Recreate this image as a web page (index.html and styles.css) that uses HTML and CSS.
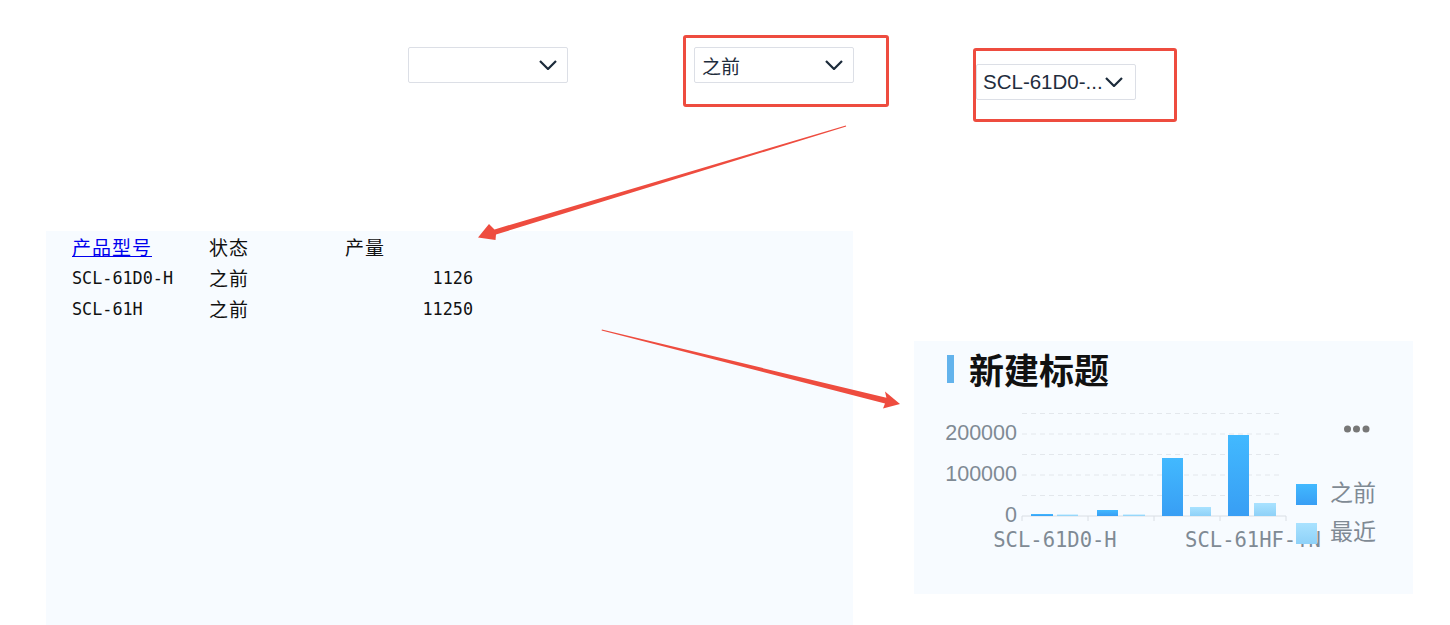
FILE: index.html
```html
<!DOCTYPE html>
<html lang="zh-CN">
<head>
    <meta charset="UTF-8">
    <meta name="viewport" content="width=device-width, initial-scale=1.0">
    <title>仪表板设计</title>
    <link rel="stylesheet" href="styles.css">
</head>
<body>
    <div class="canvas">
        <!-- filter widgets -->
        <div class="select select-a">
            <span class="select-text"></span>
            <svg class="chevron" width="18" height="10" viewBox="0 0 18 10"><polyline points="1,1 9,9 17,1"/></svg>
        </div>
        <div class="select select-b">
            <span class="select-text">之前</span>
            <svg class="chevron" width="18" height="10" viewBox="0 0 18 10"><polyline points="1,1 9,9 17,1"/></svg>
        </div>
        <div class="select select-c">
            <span class="select-text latin">SCL-61D0-...</span>
            <svg class="chevron" width="18" height="10" viewBox="0 0 18 10"><polyline points="1,1 9,9 17,1"/></svg>
        </div>

        <!-- detail table -->
        <div class="panel table-panel">
            <table class="data-table">
                <thead>
                    <tr>
                        <th class="col-model"><a href="#">产品型号</a></th>
                        <th class="col-state">状态</th>
                        <th class="col-qty">产量</th>
                    </tr>
                </thead>
                <tbody>
                    <tr>
                        <td class="col-model">SCL-61D0-H</td>
                        <td class="col-state">之前</td>
                        <td class="col-qty">1126</td>
                    </tr>
                    <tr>
                        <td class="col-model">SCL-61H</td>
                        <td class="col-state">之前</td>
                        <td class="col-qty">11250</td>
                    </tr>
                </tbody>
            </table>
        </div>

        <!-- bar chart -->
        <div class="panel chart-panel">
            <div class="chart-title">
                <span class="title-bar"></span>
                <h2>新建标题</h2>
            </div>
            <svg class="chart" width="499" height="199" viewBox="0 0 499 199">
                <defs>
                    <linearGradient id="gBefore" x1="0" y1="0" x2="0" y2="1">
                        <stop offset="0" stop-color="#42b9ff"/>
                        <stop offset="1" stop-color="#389ef4"/>
                    </linearGradient>
                    <linearGradient id="gRecent" x1="0" y1="0" x2="0" y2="1">
                        <stop offset="0" stop-color="#a9e2ff"/>
                        <stop offset="1" stop-color="#8ed1f8"/>
                    </linearGradient>
                </defs>
                <g class="grid">
                    <line x1="108" y1="18.5" x2="366" y2="18.5"/>
                    <line x1="108" y1="39" x2="366" y2="39"/>
                    <line x1="108" y1="59.5" x2="366" y2="59.5"/>
                    <line x1="108" y1="80" x2="366" y2="80"/>
                    <line x1="108" y1="100.5" x2="366" y2="100.5"/>
                </g>
                <g class="axis">
                    <line x1="108" y1="121" x2="372" y2="121"/>
                    <line x1="108" y1="121" x2="108" y2="126"/>
                    <line x1="174" y1="121" x2="174" y2="126"/>
                    <line x1="240" y1="121" x2="240" y2="126"/>
                    <line x1="306" y1="121" x2="306" y2="126"/>
                    <line x1="372" y1="121" x2="372" y2="126"/>
                </g>
                <g class="y-labels">
                    <text x="103" y="39">200000</text>
                    <text x="103" y="80">100000</text>
                    <text x="103" y="121">0</text>
                </g>
                <g class="bars">
                    <rect x="117" y="119" width="22" height="2" fill="url(#gBefore)"/>
                    <rect x="143" y="119.5" width="21" height="1.5" fill="url(#gRecent)"/>
                    <rect x="183" y="115" width="21" height="6" fill="url(#gBefore)"/>
                    <rect x="209" y="119.5" width="22" height="1.5" fill="url(#gRecent)"/>
                    <rect x="248" y="63" width="21" height="58" fill="url(#gBefore)"/>
                    <rect x="276" y="112" width="21" height="9" fill="url(#gRecent)"/>
                    <rect x="314" y="40" width="21" height="81" fill="url(#gBefore)"/>
                    <rect x="340" y="108" width="22" height="13" fill="url(#gRecent)"/>
                </g>
                <g class="x-labels">
                    <text x="141" y="146">SCL-61D0-H</text>
                    <text x="339" y="146">SCL-61HF-TN</text>
                </g>
                <g class="legend">
                    <rect x="382" y="89" width="21" height="21" fill="url(#gBefore)"/>
                    <rect x="382" y="128" width="21" height="21" fill="url(#gRecent)"/>
                    <text x="416" y="100">之前</text>
                    <text x="416" y="139">最近</text>
                </g>
                <g class="more">
                    <circle cx="433.5" cy="34" r="3.5"/>
                    <circle cx="442.5" cy="34" r="3.5"/>
                    <circle cx="452" cy="34" r="3.5"/>
                </g>
            </svg>
        </div>

        <!-- annotations -->
        <div class="mark mark-b"></div>
        <div class="mark mark-c"></div>
        <svg class="arrows" width="1450" height="625" viewBox="0 0 1450 625">
            <polygon points="846.2,126.5 496,234.5 495.5,240 478,237.5 489,224 494.5,229.4 845.8,125.5"/>
            <polygon points="601.9,329.5 886.4,397.7 885,391.5 900,404 883,408.5 885,403.5 601.6,330.5"/>
        </svg>
    </div>
</body>
</html>
```

FILE: styles.css
```css
* {
    margin: 0;
    padding: 0;
    box-sizing: border-box;
}
body {
    background-color: #fff;
    font-family: "Noto Sans CJK SC", "Liberation Sans", sans-serif;
    color: #1f2d3d;
}
.canvas {
    position: relative;
    width: 1450px;
    height: 625px;
    overflow: hidden;
}

/* selects */
.select {
    position: absolute;
    width: 160px;
    height: 36px;
    background: #fff;
    border: 1px solid #dcdfe6;
    border-radius: 2px;
    display: flex;
    align-items: center;
    justify-content: space-between;
    padding: 0 10px 0 7px;
}
.select-a { left: 408px; top: 47px; }
.select-b { left: 694px; top: 47px; }
.select-c { left: 976px; top: 64px; padding: 0 12px 0 6px; }
.select-text {
    font-size: 19px;
    color: #1f2d3d;
    white-space: nowrap;
}
.select-text.latin {
    font-family: "Liberation Sans", sans-serif;
    font-size: 20.5px;
}
.chevron polyline {
    fill: none;
    stroke: #1b2a3a;
    stroke-width: 2.2;
}

/* panels */
.panel {
    position: absolute;
    background-color: #f7fbff;
}
.table-panel {
    left: 46px;
    top: 231px;
    width: 807px;
    height: 394px;
    padding-left: 26px;
}
.data-table {
    border-collapse: collapse;
    table-layout: fixed;
}
.data-table th,
.data-table td {
    height: 31px;
    padding: 0;
    text-align: left;
    font-weight: normal;
    white-space: nowrap;
    vertical-align: middle;
    color: #111;
}
.data-table th {
    font-size: 19px;
    letter-spacing: 1px;
}
.data-table th a {
    color: #0000ee;
}
.col-model { width: 137px; }
.col-state { width: 136px; }
.col-qty { width: 128px; }
.data-table td.col-model,
.data-table td.col-qty {
    font-family: "DejaVu Sans Mono", monospace;
    font-size: 16.8px;
}
.data-table td.col-state {
    font-size: 19px;
    letter-spacing: 1px;
}
.data-table td.col-qty {
    text-align: right;
}

/* chart */
.chart-panel {
    left: 914px;
    top: 341px;
    width: 499px;
    height: 253px;
}
.chart-title {
    display: flex;
    align-items: center;
    gap: 15px;
    padding: 14px 0 0 33px;
    height: 42px;
}
.title-bar {
    width: 7px;
    height: 28px;
    background-color: #63b3ec;
}
.chart-title h2 {
    font-size: 35px;
    line-height: 28px;
    font-weight: bold;
    color: #111;
}
.chart {
    display: block;
    margin-top: 12px;
}
.grid line {
    stroke: #e3e7ec;
    stroke-dasharray: 5 4;
}
.axis line {
    stroke: #d9dee4;
}
.y-labels text {
    font-family: "Liberation Sans", sans-serif;
    font-size: 21.5px;
    fill: #7f8a94;
    text-anchor: end;
    dominant-baseline: middle;
}
.x-labels text {
    font-family: "DejaVu Sans Mono", monospace;
    font-size: 20.5px;
    fill: #7f8a94;
    text-anchor: middle;
    dominant-baseline: middle;
}
.legend text {
    font-family: "Noto Sans CJK SC", sans-serif;
    font-size: 23px;
    fill: #7f8a94;
    dominant-baseline: middle;
}
.more circle {
    fill: #777;
}

/* annotations */
.mark {
    position: absolute;
    border: 3px solid #ee4c3f;
    border-radius: 3px;
}
.mark-b { left: 683px; top: 35px; width: 206px; height: 72px; }
.mark-c { left: 973px; top: 48px; width: 204px; height: 74px; }
.arrows {
    position: absolute;
    left: 0;
    top: 0;
    pointer-events: none;
}
.arrows polygon {
    fill: #ee4c3f;
}
```
